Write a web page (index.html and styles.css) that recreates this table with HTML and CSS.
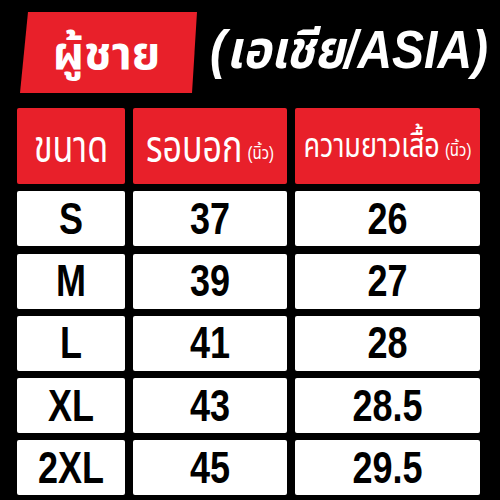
FILE: index.html
```html
<!DOCTYPE html>
<html lang="th">
<head>
<meta charset="utf-8">
<link rel="stylesheet" href="styles.css">
</head>
<body>
<div class="page">
  <header class="top">
    <div class="badge"><span class="badge-text">ผู้ชาย</span></div>
    <div class="title"><span class="title-text">(เอเชีย/ASIA)</span></div>
  </header>
  <div class="chart">
    <div class="cell head"><span class="hline"><span class="th">ขนาด</span></span></div>
    <div class="cell head"><span class="hline"><span class="th">รอบอก</span><span class="unit">(นิ้ว)</span></span></div>
    <div class="cell head"><span class="hline"><span class="th small">ความยาวเสื้อ</span><span class="unit">(นิ้ว)</span></span></div>

    <div class="cell"><span class="val">S</span></div>
    <div class="cell"><span class="val">37</span></div>
    <div class="cell"><span class="val">26</span></div>

    <div class="cell"><span class="val">M</span></div>
    <div class="cell"><span class="val">39</span></div>
    <div class="cell"><span class="val">27</span></div>

    <div class="cell"><span class="val">L</span></div>
    <div class="cell"><span class="val">41</span></div>
    <div class="cell"><span class="val">28</span></div>

    <div class="cell"><span class="val">XL</span></div>
    <div class="cell"><span class="val">43</span></div>
    <div class="cell"><span class="val">28.5</span></div>

    <div class="cell"><span class="val">2XL</span></div>
    <div class="cell"><span class="val">45</span></div>
    <div class="cell"><span class="val">29.5</span></div>
  </div>
</div>
</body>
</html>
```
FILE: styles.css
```css
html, body {
  margin: 0;
  padding: 0;
  background: #000;
}
body {
  width: 500px;
  height: 500px;
  overflow: hidden;
  font-family: "Liberation Sans", "Noto Sans Thai", "Noto Sans Thai Looped", Loma, Garuda, sans-serif;
}
.page {
  padding: 12px 0 0 17px;
}
.top {
  display: flex;
  align-items: center;
  height: 81px;
  margin-left: 3px;
}
.badge {
  width: 177px;
  height: 81px;
  background: #e8202a;
  clip-path: polygon(8px 0, 100% 0, calc(100% - 5px) 100%, 0 100%);
  display: flex;
  align-items: center;
  justify-content: center;
}
.badge-text {
  display: inline-block;
  color: #fff;
  font-weight: bold;
  font-size: 46px;
  line-height: 1;
  margin-right: 4px;
}
.title {
  margin-left: 13px;
}
.title-text {
  display: inline-block;
  color: #fff;
  font-weight: bold;
  font-style: italic;
  font-size: 48px;
  transform: scaleY(1.1);
}
.chart {
  margin-top: 15px;
  display: grid;
  grid-template-columns: 108px 154px 185px;
  grid-template-rows: 76px repeat(5, 55px);
  column-gap: 8px;
  row-gap: 7.25px;
}
.cell {
  background: #fff;
  border-radius: 2px;
  display: flex;
  align-items: center;
  justify-content: center;
}
.cell.head {
  background: #e8202a;
}
.hline {
  white-space: nowrap;
  color: #fff;
  line-height: 1;
}
.th {
  display: inline-block;
  font-size: 34px;
  transform: scaleY(1.3);
}
.th.small {
  font-size: 27px;
  transform: scaleY(1.23);
}
.unit {
  display: inline-block;
  font-size: 15px;
  margin-left: 5px;
  transform: scaleY(1.2);
}
.val {
  display: inline-block;
  font-weight: bold;
  font-size: 36px;
  color: #000;
  transform: scaleY(1.25);
}
```
